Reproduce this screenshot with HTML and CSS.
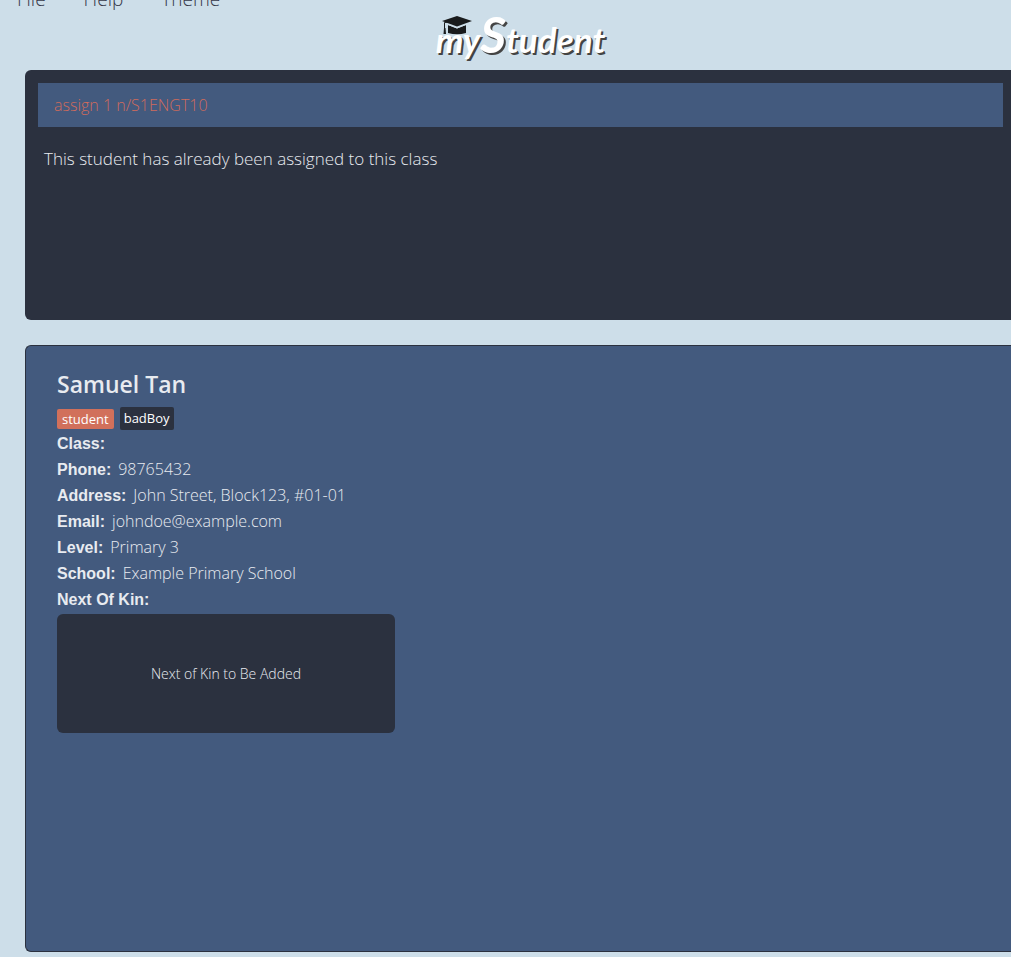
FILE: index.html
```html
<!DOCTYPE html>
<html lang="en">
<head>
<meta charset="utf-8">
<title>myStudent</title>
<link rel="stylesheet" href="styles.css">
</head>
<body>
<nav class="menu">
  <button type="button">File</button>
  <button type="button">Help</button>
  <button type="button">Theme</button>
</nav>
<header class="brand">
  <h1 class="logo">
    <svg class="cap" viewBox="0 0 32 20" aria-hidden="true">
      <path d="M7 9l9 3.500L25 9v8q-9 2.500-18 0z"/>
      <path class="cap-edge" d="M7 8.500l9 3.500 9-3.500"/>
      <path d="M16 0 31 5 16 10.500 1 5z"/>
      <path class="cap-cord" d="M16 5 3.500 6.500V13"/>
      <path d="M3 12h1.500l.5 6H2.500z"/>
    </svg>
    <span>my</span><span class="logo-initial">S</span>tudent
  </h1>
</header>
<main class="content">
  <section class="console">
    <input class="command" type="text" aria-label="Command" value="assign 1 n/S1ENGT10" spellcheck="false">
    <p class="result">This student has already been assigned to this class</p>
  </section>
  <section class="person">
    <h2 class="name">Samuel Tan</h2>
    <div class="tags">
      <span class="tag tag-role">student</span>
      <span class="tag tag-note">badBoy</span>
    </div>
    <dl class="details">
      <div><dt>Class:</dt><dd></dd></div>
      <div><dt>Phone:</dt><dd>98765432</dd></div>
      <div><dt>Address:</dt><dd>John Street, Block123, #01-01</dd></div>
      <div><dt>Email:</dt><dd>johndoe@example.com</dd></div>
      <div><dt>Level:</dt><dd>Primary 3</dd></div>
      <div><dt>School:</dt><dd>Example Primary School</dd></div>
      <div><dt>Next Of Kin:</dt><dd></dd></div>
    </dl>
    <div class="kin">Next of Kin to Be Added</div>
  </section>
</main>
</body>
</html>
```
FILE: styles.css
```css
* { box-sizing: border-box; margin: 0; padding: 0; }

body {
  display: flex;
  flex-direction: column;
  min-height: 100vh;
  background: #cddee9;
  color: #e8ebf0;
  font-family: "Open Sans", "Noto Sans", sans-serif;
  font-size: 15px;
}

/* The menu bar is scrolled partly past the top edge. */
.menu {
  display: flex;
  gap: 38px;
  height: 12px;
  padding-left: 17px;
  align-items: flex-end;
}
.menu button {
  border: 0;
  background: none;
  color: #35384a;
  font: 300 19px/26px "Open Sans", "Noto Sans", sans-serif;
}

.brand { display: flex; justify-content: center; height: 58px; padding-left: 30px; }
.logo {
  position: relative;
  color: #fff;
  font: italic 700 35px/44px Lato, sans-serif;
  text-shadow: 2px 2px 0 #444;
  white-space: nowrap;
}
.logo-initial { font-size: 50px; }
.cap {
  position: absolute;
  left: 5px;
  top: 4px;
  width: 32px;
  height: 20px;
  fill: #191b1d;
}
.cap-edge { fill: none; stroke: #cddee9; }
.cap-cord { fill: none; stroke: #191b1d; }

.content {
  flex: 1;
  display: flex;
  flex-direction: column;
  gap: 25px;
  padding: 0 0 5px 25px;
}

.console {
  height: 250px;
  padding: 13px 8px 13px 13px;
  border-radius: 6px 0 0 6px;
  background: #2b313f;
}
.command {
  display: block;
  width: 100%;
  height: 44px;
  padding: 0 16px;
  border: 0;
  background: #435a7e;
  color: #d06b5c;
  font: 300 16px/24px "Open Sans", "Noto Sans", sans-serif;
}
.result {
  padding: 20px 6px;
  font-size: 17px;
  font-weight: 300;
  line-height: 24px;
}

.person {
  flex: 1;
  padding: 22px 31px;
  border: 1px solid #2b313f;
  border-right: 0;
  border-radius: 6px 0 0 6px;
  background: #435a7e;
}
.name { font-size: 23px; font-weight: 600; line-height: 32px; }
.tags { display: flex; align-items: center; gap: 6px; margin-top: 7px; }
.tag { border-radius: 2px; color: #fff; font-size: 13px; }
.tag-role { padding: 0 5px; background: #d1705b; line-height: 20px; }
.tag-note { padding: 0 4px; background: #2b313f; line-height: 23px; }
.details { margin-top: 1px; line-height: 26px; }
.details div { display: flex; align-items: baseline; gap: 7px; height: 26px; }
.details dt { font-family: "Liberation Sans", Arial, sans-serif; font-size: 16px; font-weight: 700; }
.details dd { font-size: 16px; font-weight: 300; line-height: 20px; }
.kin {
  display: grid;
  place-items: center;
  width: 338px;
  height: 119px;
  margin-top: 1px;
  border-radius: 6px;
  background: #2b313f;
  font-size: 14px;
  font-weight: 300;
}
```
